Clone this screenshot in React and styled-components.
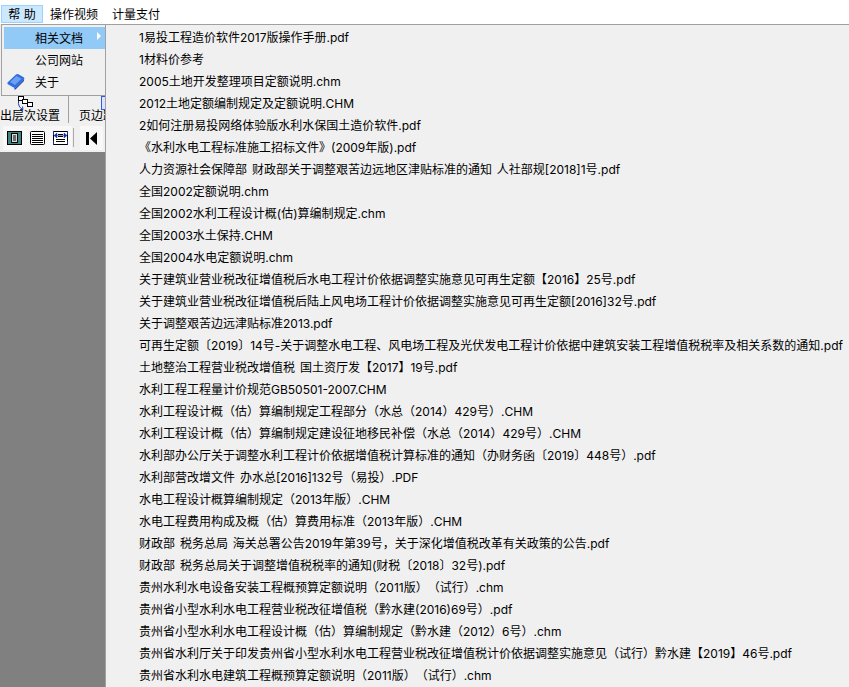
import React from 'react';
import styled, { createGlobalStyle } from 'styled-components';

const docs = [
  '1易投工程造价软件2017版操作手册.pdf',
  '1材料价参考',
  '2005土地开发整理项目定额说明.chm',
  '2012土地定额编制规定及定额说明.CHM',
  '2如何注册易投网络体验版水利水保国土造价软件.pdf',
  '《水利水电工程标准施工招标文件》(2009年版).pdf',
  '人力资源社会保障部 财政部关于调整艰苦边远地区津贴标准的通知 人社部规[2018]1号.pdf',
  '全国2002定额说明.chm',
  '全国2002水利工程设计概(估)算编制规定.chm',
  '全国2003水土保持.CHM',
  '全国2004水电定额说明.chm',
  '关于建筑业营业税改征增值税后水电工程计价依据调整实施意见可再生定额【2016】25号.pdf',
  '关于建筑业营业税改征增值税后陆上风电场工程计价依据调整实施意见可再生定额[2016]32号.pdf',
  '关于调整艰苦边远津贴标准2013.pdf',
  '可再生定额〔2019〕14号-关于调整水电工程、风电场工程及光伏发电工程计价依据中建筑安装工程增值税税率及相关系数的通知.pdf',
  '土地整治工程营业税改增值税 国土资厅发【2017】19号.pdf',
  '水利工程工程量计价规范GB50501-2007.CHM',
  '水利工程设计概（估）算编制规定工程部分（水总（2014）429号）.CHM',
  '水利工程设计概（估）算编制规定建设征地移民补偿（水总（2014）429号）.CHM',
  '水利部办公厅关于调整水利工程计价依据增值税计算标准的通知（办财务函〔2019〕448号）.pdf',
  '水利部营改增文件 办水总[2016]132号（易投）.PDF',
  '水电工程设计概算编制规定（2013年版）.CHM',
  '水电工程费用构成及概（估）算费用标准（2013年版）.CHM',
  '财政部 税务总局 海关总署公告2019年第39号，关于深化增值税改革有关政策的公告.pdf',
  '财政部 税务总局关于调整增值税税率的通知(财税〔2018〕32号).pdf',
  '贵州水利水电设备安装工程概预算定额说明（2011版）（试行）.chm',
  '贵州省小型水利水电工程营业税改征增值税（黔水建(2016)69号）.pdf',
  '贵州省小型水利水电工程设计概（估）算编制规定（黔水建（2012）6号）.chm',
  '贵州省水利厅关于印发贵州省小型水利水电工程营业税改征增值税计价依据调整实施意见（试行）黔水建【2019】46号.pdf',
  '贵州省水利水电建筑工程概预算定额说明（2011版）（试行）.chm',
];

const GlobalStyle = createGlobalStyle`
  html, body { margin: 0; padding: 0; background: #f0f0f0; }
  body {
    font-family: Inter, "Noto Sans CJK SC", sans-serif;
    font-size: 12px;
    color: #000;
    text-spacing-trim: space-all;
  }
`;

const Window = styled.div`
  width: 849px;
  height: 687px;
  overflow: hidden;
  display: flex;
  flex-direction: column;
`;

const MenuBar = styled.div`
  flex: none;
  height: 24px;
  box-sizing: border-box;
  display: flex;
  align-items: stretch;
  padding: 5px 0 1px 1px;
  background: #fff;
`;

const MenuTitle = styled.div`
  width: ${p => p.$w}px;
  display: flex;
  align-items: center;
  justify-content: center;
  box-sizing: border-box;
  padding-bottom: 2px;
  font-size: 12px;
  white-space: pre;
  ${p => p.$open && 'background: #cce8ff; border: 1px solid #99d1ff;'}
`;

const Body = styled.div`
  flex: 1;
  display: flex;
  min-height: 0;
`;

const LeftColumn = styled.div`
  flex: none;
  width: 105px;
  display: flex;
  flex-direction: column;
  background: #808080;
`;

const DropArea = styled.div`
  flex: none;
  padding-left: 1px;
  background: #f0f0f0;
`;

const DropMenu = styled.div`
  height: 72px;
  box-sizing: border-box;
  padding: 2px 0 0 2px;
  background: #f0f0f0;
  border: 1px solid #a0a0a0;
  border-right: none;
`;

const DropItem = styled.div`
  position: relative;
  height: 22px;
  box-sizing: border-box;
  display: flex;
  align-items: center;
  padding: 0 0 2px 31px;
  font-size: 12px;
  ${p => p.$active && 'background: #91c9f7;'}
`;

const Arrow = styled.span`
  position: absolute;
  right: 4px;
  top: 5px;
  border-left: 4px solid #fff;
  border-top: 4px solid transparent;
  border-bottom: 4px solid transparent;
`;

const BookIcon = styled.svg`
  position: absolute;
  left: 3px;
  top: 2px;
`;

const TabRow = styled.div`
  flex: none;
  height: 30px;
  box-sizing: border-box;
  padding-bottom: 3px;
  display: flex;
  background: #f0f0f0;
  overflow: hidden;
`;

const RibbonTab = styled.div`
  position: relative;
  flex: none;
  box-sizing: border-box;
  width: ${p => p.$w}px;
  display: flex;
  align-items: flex-end;
  justify-content: ${p => (p.$last ? 'flex-start' : 'flex-end')};
  padding: 0 ${p => (p.$last ? 0 : 8)}px 0 ${p => (p.$last ? 10 : 0)}px;
  font-size: 12px;
  line-height: 14px;
  white-space: nowrap;
  overflow: hidden;
  ${p => !p.$last && 'border-right: 1px solid #a0a0a0;'}
`;

const TabIcon = styled.svg`
  position: absolute;
  top: 0;
  left: ${p => p.$x}px;
`;

const ToolBar = styled.div`
  flex: none;
  height: 26px;
  box-sizing: border-box;
  padding: 0 0 2px 3px;
  display: flex;
  align-items: stretch;
  background: #f0f0f0;
`;

const ToolButton = styled.div`
  width: ${p => p.$w || 23}px;
  display: flex;
  align-items: center;
  justify-content: center;
  background: ${p => (p.$checked
    ? 'repeating-conic-gradient(#fff 0 25%, #f0f0f0 0 50%) 0 0 / 2px 2px'
    : '#f8f8f8')};
`;

const ToolSep = styled.div`
  width: 1px;
  height: 19px;
  margin: 2px 6px 0 1px;
  background: #a8a8a8;
`;

const SubMenu = styled.div`
  flex: 1;
  min-width: 0;
  box-sizing: border-box;
  background: #f0f0f0;
  border-top: 1px solid #a0a0a0;
  border-left: 1px solid #a0a0a0;
`;

const DocItem = styled.div`
  height: 22px;
  display: flex;
  align-items: center;
  padding-left: 33px;
  font-size: 12px;
  word-spacing: 1.5px;
  white-space: nowrap;
`;

const Book = () => (
  <BookIcon width="18" height="18" viewBox="0 0 18 18">
    <path d="M0.5 9.5 L9 1.5 Q10 0.5 11.5 1.2 L17 4.5 Q17.8 5.5 17 6.5 L9 14.5 Q8 15.5 6.5 14.8 L1 11.5 Q0 10.5 0.5 9.5 Z" fill="#2f6fe0" />
    <path d="M3 9 L9.5 3 L14.5 5.8 L8 12 Z" fill="#6f9ff0" />
    <path d="M1 11.5 L7.5 15 L7.5 16.8 L1.5 13.5 Q0.5 12.5 1 11.5 Z" fill="#e4ecfb" />
    <path d="M7.5 15 Q8.4 15.3 9 14.5 L17 6.5 L17 8 L9 16 Q8.2 17 7.5 16.8 Z" fill="#1c47a8" />
  </BookIcon>
);

const HierarchyIcon = () => (
  <TabIcon $x={17} width="16" height="14" viewBox="0 0 16 14" fill="none" stroke="#000">
    <rect x="1.5" y="0.5" width="5" height="4" fill="#fff" />
    <rect x="5.5" y="3.5" width="5" height="4" fill="#fff" />
    <rect x="10.5" y="6.5" width="5" height="4" fill="#fff" />
    <path d="M1.5 5 C1 9 2.5 11.5 5 13" stroke="#2040b0" />
    <path d="M3 13.5 L6 13.5 L5.5 10.5" stroke="#2040b0" />
  </TabIcon>
);

const PageIcon = () => (
  <TabIcon $x={32} width="5" height="14" viewBox="0 0 5 14">
    <rect x="0.5" y="0.5" width="8" height="13" fill="#dfe0ff" stroke="#3060d0" />
  </TabIcon>
);

const PageTool = () => (
  <svg width="15" height="14" viewBox="0 0 15 14">
    <rect x="0.5" y="0.5" width="14" height="13" fill="#3f8585" stroke="#000" />
    <rect x="4.5" y="2.5" width="6" height="9" fill="#d8d8d8" stroke="#000" />
    <path d="M6 5h3M6 7h3M6 9h3" stroke="#000" />
  </svg>
);

const LinesTool = () => (
  <svg width="15" height="14" viewBox="0 0 15 14">
    <rect x="0.5" y="0.5" width="14" height="13" rx="1" fill="#fff" stroke="#000" />
    <path d="M2 3.5h11M2 5.5h11M2 7.5h11M2 9.5h11M2 11.5h11" stroke="#000" />
  </svg>
);

const WidthTool = () => (
  <svg width="15" height="14" viewBox="0 0 15 14">
    <rect x="0.5" y="0.5" width="14" height="13" fill="#fff" stroke="#000" />
    <path d="M0.5 0v4M0.5 10v4M14.5 0v4M14.5 10v4" stroke="#1030a0" />
    <path d="M5 3.5h5M5 5.5h5M3 8.5h9M3 10.5h9" stroke="#000" />
    <path d="M1 4.5l3-2.5v5zM14 4.5l-3-2.5v5zM4 4.5h7" fill="#1030a0" stroke="#1030a0" strokeWidth="0.5" />
  </svg>
);

const FirstTool = () => (
  <svg width="11" height="13" viewBox="0 0 11 13">
    <rect x="0" y="0" width="3" height="13" fill="#000" />
    <path d="M11 0 L4 6.5 L11 13 Z" fill="#000" />
  </svg>
);

export default function App() {
  return (
    <>
      <GlobalStyle />
      <Window>
        <MenuBar>
          <MenuTitle $w={42} $open>{'帮 助'}</MenuTitle>
          <MenuTitle $w={62}>操作视频</MenuTitle>
          <MenuTitle $w={62}>计量支付</MenuTitle>
        </MenuBar>
        <Body>
          <LeftColumn>
            <DropArea>
              <DropMenu>
                <DropItem $active>相关文档<Arrow /></DropItem>
                <DropItem>公司网站</DropItem>
                <DropItem><Book />关于</DropItem>
              </DropMenu>
            </DropArea>
            <TabRow>
              <RibbonTab $w={69}><HierarchyIcon />出层次设置</RibbonTab>
              <RibbonTab $w={36} $last><PageIcon />页边距</RibbonTab>
            </TabRow>
            <ToolBar>
              <ToolButton><PageTool /></ToolButton>
              <ToolButton $checked><LinesTool /></ToolButton>
              <ToolButton><WidthTool /></ToolButton>
              <ToolSep />
              <ToolButton $w={23}><FirstTool /></ToolButton>
            </ToolBar>
          </LeftColumn>
          <SubMenu>
            {docs.map(d => <DocItem key={d}>{d}</DocItem>)}
          </SubMenu>
        </Body>
      </Window>
    </>
  );
}
